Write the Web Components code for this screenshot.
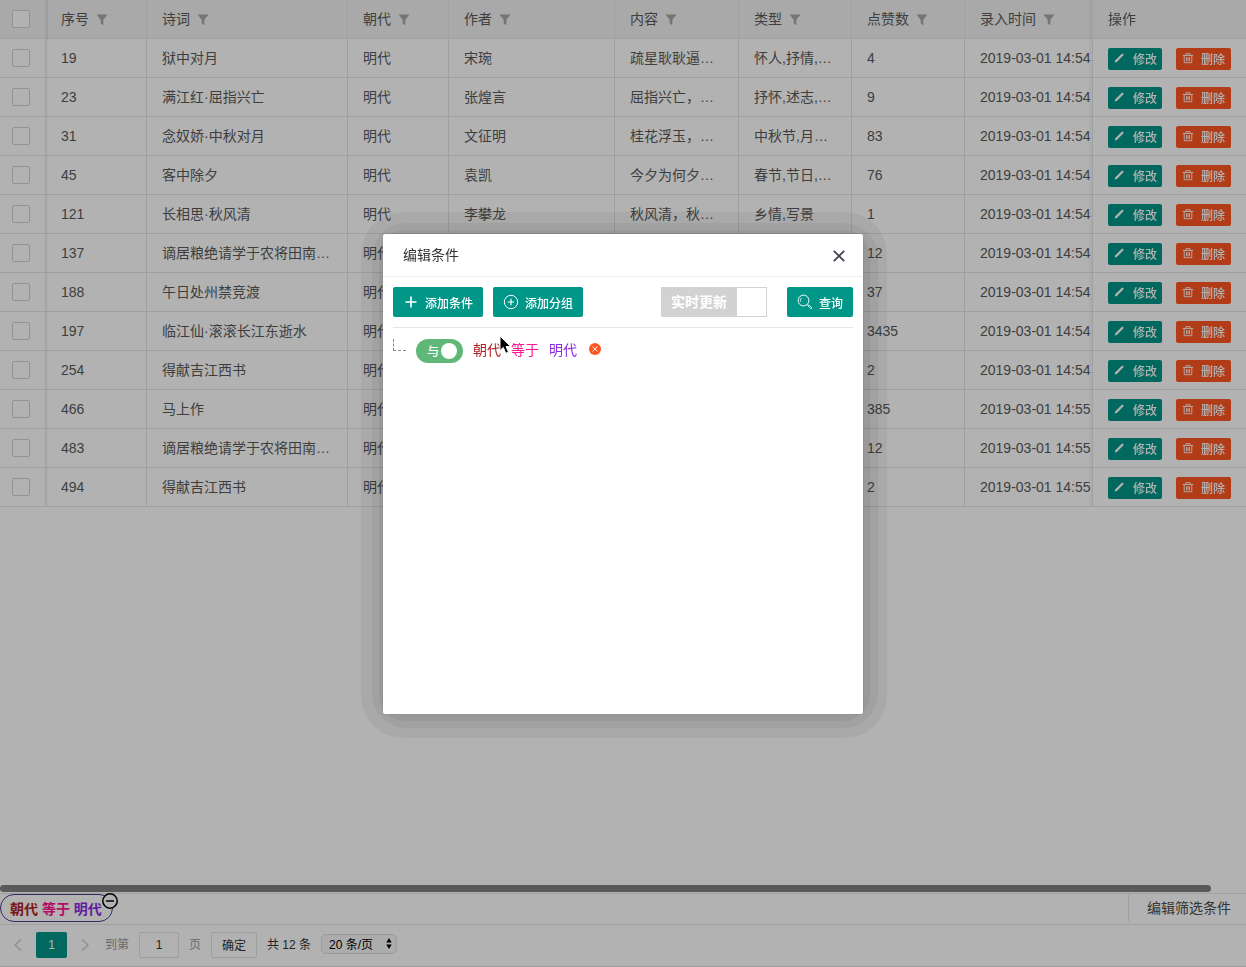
<!DOCTYPE html>
<html lang="zh-CN">
<head>
<meta charset="utf-8">
<title>诗词列表</title>
<style>
  html, body { margin: 0; height: 100%; }
  body {
    overflow: hidden;
    font: 14px/24px "Liberation Sans", "Noto Sans CJK SC", sans-serif;
    color: #5a5a5a;
    background: #fff;
    --teal: #009688;
    --danger: #ff5722;
    --line: #e6e6e6;
    --edge: #d2d2d2;
  }
</style>
</head>
<body>
<poem-page></poem-page>

<script>
const ICONS = {
  filter: ['0 0 12 12', '<path fill="currentColor" d="M0.5 0.5h11L7.3 5.8V11.2L4.7 9.6V5.8z"/>'],
  edit: ['0 0 12 12', '<path fill="currentColor" d="M1.700 10.500l.6-2.200 6.600-6.600q.5-.4.900 0l.7.700q.4.400 0 .900l-6.600 6.600z"/>'],
  trash: ['0 0 12 12', '<g fill="none" stroke="currentColor" stroke-width=".9"><path d="M.8 3.500h10.400M3.900 3.300V1.700h4.200v1.600M2.200 3.700v7h7.600v-7M4.500 5.200v4M6 5.200v4M7.500 5.200v4"/></g>'],
  plus: ['0 0 12 12', '<path fill="none" stroke="currentColor" stroke-width="1.600" d="M6 .5v11M.5 6h11"/>'],
  ring: ['0 0 16 16', '<g fill="none" stroke="currentColor"><circle cx="8" cy="8" r="6.700"/><path stroke-width="1.200" d="M8 4.800v6.400M4.800 8h6.400"/></g>'],
  search: ['0 0 16 16', '<g fill="none" stroke="currentColor"><circle cx="6.500" cy="6.500" r="5.400"/><path d="M3.500 7.500a3.200 3.200 0 0 1 1-3.600" stroke-width=".8"/><path d="M10.400 10.500l1 1"/><path d="M11.700 10.900l3 2.800q.3 1-.8 1l-2.900-2.900z" stroke-width=".8"/></g>'],
  close: ['0 0 12 12', '<path fill="none" stroke="currentColor" stroke-width="1.800" d="M.8.800l10.400 10.400M11.200.800L.8 11.200"/>'],
  remove: ['0 0 12 12', '<circle cx="6" cy="6" r="6" fill="currentColor"/><path stroke="#fff" stroke-width=".9" d="M3.500 3.500l5 5M8.500 3.500l-5 5"/>'],
  minus: ['0 0 16 16', '<circle cx="8" cy="8" r="7.200" fill="#fff" stroke="currentColor" stroke-width="1.500"/><path stroke="currentColor" stroke-width="1.500" d="M4 8h8"/>'],
  prev: ['0 0 8 12', '<path fill="none" stroke="currentColor" stroke-width="1.200" d="M7 .5L1 6l6 5.500"/>'],
  next: ['0 0 8 12', '<path fill="none" stroke="currentColor" stroke-width="1.200" d="M1 .5L7 6l-6 5.500"/>'],
  updown: ['0 0 6 12', '<path fill="#000" d="M3 0l3 5H0zM3 12l3-5H0z"/>'],
  pointer: ['0 0 13 20', '<path fill="#000" stroke="#fff" stroke-width="1" d="M1 1v14.500l3.300-3.100 2.500 5.900 2.700-1.100L7 11.500h4.700z"/>']
};

function define(name, html, setup) {
  customElements.define(name, class extends HTMLElement {
    constructor() {
      super();
      const t = document.createElement('template');
      t.innerHTML = html;
      this.attachShadow({ mode: 'open' }).append(t.content.cloneNode(true));
    }
    connectedCallback() { if (setup) setup(this, this.shadowRoot); }
  });
}

/* vector icon; its box is sized by the user */
define('ui-icon', `<style>
  :host { display: inline-block; flex: none; width: 12px; height: 12px; }
  svg { display: block; width: 100%; height: 100%; overflow: visible; }
</style><svg aria-hidden="true"></svg>`, (el, root) => {
  const [box, body] = ICONS[el.getAttribute('name')];
  const svg = root.querySelector('svg');
  svg.setAttribute('viewBox', box);
  svg.innerHTML = body;
});

define('ui-button', `<style>
  :host { display: inline-block; flex: none; }
  button {
    display: flex; align-items: center; box-sizing: border-box; height: 30px; margin: 0; padding: 3px 10px 0;
    border: 0; border-radius: 2px; background: var(--teal); color: #fff;
    font: inherit; font-size: 12px; font-weight: 500; line-height: 26px; white-space: nowrap; cursor: pointer;
  }
  :host([size=xs]) button { height: 22px; padding: 1px 5px 0; line-height: 20px; }
  :host([kind=danger]) button { padding-right: 6px; background: var(--danger); }
  ::slotted(ui-icon) { margin: -3px 8px 0 0; }
</style><button type="button"><slot></slot></button>`);

define('data-grid', `<style>
  :host { display: block; position: relative; isolation: isolate; overflow: hidden; }
  table { width: 100%; min-width: 1282px; table-layout: fixed; border-collapse: separate; border-spacing: 0; }
  th, td {
    box-sizing: border-box; height: 39px; padding: 0 15px; text-align: left; font-weight: 400; line-height: 28px;
    white-space: nowrap; overflow: hidden; border: 0 solid var(--line); border-width: 0 1px 1px 0; background: #fff;
  }
  th { background: #f2f2f2; }
  th ui-icon { margin-left: 3px; color: #a8a8a8; vertical-align: -2px; }
  .pick { position: sticky; left: 0; z-index: 1; padding: 0 0 0 12px; overflow: visible; box-shadow: 2px 0 0 rgba(0,0,0,.03); }
  .ops { position: sticky; right: 0; z-index: 1; border-width: 0 0 1px 1px; overflow: visible; box-shadow: -3px 0 0 rgba(0,0,0,.03); }
  th.pick { box-shadow: 2px 0 0 rgba(0,0,0,.06); }
  .tools { display: flex; gap: 14px; padding-top: 2px; }
  .tools ui-icon { margin-top: -3px; }
  .tools ui-icon[name=trash] { margin-left: 1px; margin-right: 7px; }
  input { display: block; appearance: none; box-sizing: border-box; width: 18px; height: 18px; margin: 0; border: 1px solid var(--edge); border-radius: 2px; background: #fff; }
  .bar { position: absolute; z-index: 2; left: 0; bottom: 1px; width: 97.200%; height: 7px; border-radius: 4px; background: #808080; }
</style>
<table>
  <colgroup><col style="width:46px"><col style="width:101px"><col style="width:201px"><col style="width:101px"><col style="width:166px"><col style="width:124px"><col style="width:113px"><col style="width:113px"><col><col style="width:154px"></colgroup>
  <thead><tr></tr></thead><tbody></tbody>
</table>
<div class="bar"></div>`, (el, root) => {
  const heads = ['序号', '诗词', '朝代', '作者', '内容', '类型', '点赞数', '录入时间'];
  const rows = [
    ['19', '狱中对月', '宋琬', '疏星耿耿逼…', '怀人,抒情,…', '4', '54'],
    ['23', '满江红·屈指兴亡', '张煌言', '屈指兴亡，…', '抒怀,述志,…', '9', '54'],
    ['31', '念奴娇·中秋对月', '文征明', '桂花浮玉，…', '中秋节,月…', '83', '54'],
    ['45', '客中除夕', '袁凯', '今夕为何夕…', '春节,节日,…', '76', '54'],
    ['121', '长相思·秋风清', '李攀龙', '秋风清，秋…', '乡情,写景', '1', '54'],
    ['137', '谪居粮绝请学于农将田南…', '', '', '', '12', '54'],
    ['188', '午日处州禁竞渡', '', '', '', '37', '54'],
    ['197', '临江仙·滚滚长江东逝水', '', '', '', '3435', '54'],
    ['254', '得献吉江西书', '', '', '', '2', '54'],
    ['466', '马上作', '', '', '', '385', '55'],
    ['483', '谪居粮绝请学于农将田南…', '', '', '', '12', '55'],
    ['494', '得献吉江西书', '', '', '', '2', '55']
  ];
  root.querySelector('thead tr').innerHTML =
    '<th class="pick"><input type="checkbox" aria-label="全选"></th>' +
    heads.map(h => `<th>${h} <ui-icon name="filter"></ui-icon></th>`).join('') +
    '<th class="ops">操作</th>';
  root.querySelector('tbody').innerHTML = rows.map(([id, title, who, text, kind, likes, min]) => `<tr>
    <td class="pick"><input type="checkbox" aria-label="选择 ${id}"></td>
    <td>${id}</td><td>${title}</td><td>明代</td><td>${who}</td><td>${text}</td><td>${kind}</td><td>${likes}</td><td>2019-03-01 14:${min}</td>
    <td class="ops"><div class="tools">
      <ui-button size="xs"><ui-icon name="edit"></ui-icon>修改</ui-button>
      <ui-button size="xs" kind="danger"><ui-icon name="trash"></ui-icon>删除</ui-button>
    </div></td></tr>`).join('');
});

define('filter-bar', `<style>
  :host { display: flex; justify-content: space-between; box-sizing: border-box; height: 32px; border: solid var(--line); border-width: 1px 0; }
  .chip { position: relative; box-sizing: border-box; height: 28px; padding: 0 10px 0 9px; border: 1px solid #483d8b; border-radius: 14px; font-weight: 700; line-height: 28px; white-space: nowrap; }
  .field { color: #b22222; } .op { color: #ff1493; } .value { color: #8a2be2; }
  .drop { position: absolute; right: -6px; top: -2px; padding: 0; border: 0; background: none; color: #000; line-height: 0; }
  .drop ui-icon { width: 16px; height: 16px; }
  .edit { height: 28px; padding: 0 15px 0 18px; border: 0 solid var(--line); border-left-width: 1px; border-radius: 2px 0 0 2px; background: #fff; color: #4c4c4c; font: inherit; line-height: 28px; }
</style>
<div class="chip"><span class="field">朝代</span> <span class="op">等于</span> <span class="value">明代</span><button class="drop" type="button" aria-label="移除条件"><ui-icon name="minus"></ui-icon></button></div>
<button class="edit" type="button">编辑筛选条件</button>`);

define('grid-pager', `<style>
  :host { display: flex; align-items: center; gap: 10px; box-sizing: border-box; height: 42px; padding: 0 0 2px; border-bottom: 1px solid var(--line); font-size: 12px; color: #333; white-space: nowrap; }
  nav { display: flex; align-items: center; }
  a { display: flex; align-items: center; justify-content: center; width: 36px; height: 26px; color: #c8c8c8; text-decoration: none; }
  a ui-icon { width: 8px; }
  a.now { width: 31px; border-radius: 2px; background: var(--teal); color: #fff; }
  nav + label { margin-left: -8px; }
  label { display: flex; align-items: center; gap: 10px; color: #999; }
  input, button { box-sizing: border-box; height: 26px; margin: 0; border: 1px solid #e2e2e2; border-radius: 2px; background: #fff; font: inherit; color: #333; }
  input { width: 40px; padding: 0; text-align: center; }
  button { width: 46px; padding: 1px 0 0; line-height: 24px; }
  .size { position: relative; margin-bottom: 2px; }
  select { appearance: none; display: block; box-sizing: border-box; width: 76px; height: 20px; margin: 0; padding: 1px 0 0 7px; border: 1px solid #dcdcdc; border-radius: 5px; background: #f6f6f6; font: inherit; line-height: 18px; color: #000; }
  .size ui-icon { position: absolute; right: 5px; top: 4px; width: 6px; height: 11px; pointer-events: none; }
</style>
<nav aria-label="分页"><a href="#prev" aria-label="上一页"><ui-icon name="prev"></ui-icon></a><a class="now" href="#1">1</a><a href="#next" aria-label="下一页"><ui-icon name="next"></ui-icon></a></nav>
<label>到第 <input type="text" value="1"> 页</label>
<button type="button">确定</button>
<span>共 12 条</span>
<div class="size"><select aria-label="每页条数"><option>20 条/页</option></select><ui-icon name="updown"></ui-icon></div>`);

define('ui-dialog', `<style>
  :host { position: fixed; z-index: 10; inset: 0; display: grid; place-items: center; padding-bottom: 19px; background: rgba(0,0,0,.3); }
  section { position: relative; isolation: isolate; width: 480px; }
  .halo { position: absolute; z-index: -1; background: rgba(0,0,0,.05); }
  .far { inset: -22px -24px -24px -22px; border-radius: 42px; }
  .mid { inset: -11px -15px -14px -11px; border-radius: 34px; }
  .near { inset: -4px -7px -7px -4px; border-radius: 26px; }
  .box { display: flex; flex-direction: column; min-height: 480px; border-radius: 2px; background: #fff; box-shadow: 0 0 2px rgba(0,0,0,.15); }
  header { display: flex; align-items: center; justify-content: space-between; height: 42px; padding: 0 18px 0 20px; border-bottom: 1px solid #eee; color: #333; }
  h2 { margin: 0; font: inherit; }
  header button { margin: 2px 0 0; padding: 0; border: 0; background: none; color: #444450; line-height: 0; }
  .body { flex: 1; padding: 10px; }
</style>
<section role="dialog" aria-labelledby="t">
  <div class="halo far"></div><div class="halo mid"></div><div class="halo near"></div>
  <div class="box">
    <header><h2 id="t"><slot name="title"></slot></h2><button type="button" aria-label="关闭"><ui-icon name="close"></ui-icon></button></header>
    <div class="body"><slot></slot></div>
  </div>
</section>`);

define('condition-editor', `<style>
  :host { display: block; position: relative; }
  .bar { display: flex; gap: 10px; padding-bottom: 10px; border-bottom: 1px solid var(--line); }
  .bar ui-icon[name=plus] { margin-right: 8px; margin-left: 2px; }
  .bar ui-icon[name=ring], .bar ui-icon[name=search] { width: 16px; height: 16px; margin-right: 6px; }
  .live, .join { position: relative; display: flex; box-sizing: border-box; flex: none; color: #fff; }
  .live { height: 30px; margin: 0 10px 0 auto; border: 1px solid var(--edge); font-weight: 700; line-height: 28px; }
  .live span { padding: 0 10px 0 9px; background: var(--edge); }
  .live i { width: 29px; }
  label input { position: absolute; inset: 0; width: 100%; height: 100%; margin: 0; opacity: 0; }
  .rule { display: flex; align-items: flex-start; gap: 10px; padding-top: 11px; }
  .branch { width: 12px; height: 11px; border: dashed #888; border-width: 0 0 1px 1px; }
  .join { width: 47px; height: 24px; padding: 0 6px 0 11px; align-items: center; justify-content: space-between; border-radius: 12px; background: #5fb878; font-size: 12px; font-weight: 500; }
  .join span { padding-top: 2px; }
  .join i { width: 16px; height: 16px; border-radius: 50%; background: #fff; }
  a { line-height: 22px; text-decoration: none; }
  .field { color: #b22222; } .op { color: #ff1493; } .value { color: #8a2be2; }
  .rule button { margin: 4px 0 0 2px; padding: 0; border: 0; background: none; color: var(--danger); line-height: 0; }
  .pointer { position: absolute; left: 106px; top: 48px; width: 13px; height: 20px; }
</style>
<div class="bar">
  <ui-button><ui-icon name="plus"></ui-icon>添加条件</ui-button>
  <ui-button><ui-icon name="ring"></ui-icon>添加分组</ui-button>
  <label class="live"><input type="checkbox"><span>实时更新</span><i></i></label>
  <ui-button><ui-icon name="search"></ui-icon>查询</ui-button>
</div>
<div class="rule">
  <div class="branch"></div>
  <label class="join"><input type="checkbox" checked><span>与</span><i></i></label>
  <a class="field" href="#field">朝代</a><a class="op" href="#op">等于</a><a class="value" href="#value">明代</a>
  <button type="button" aria-label="删除条件"><ui-icon name="remove"></ui-icon></button>
</div>
<ui-icon class="pointer" name="pointer"></ui-icon>`);

define('poem-page', `<style>
  :host { display: flex; flex-direction: column; height: 100vh; }
  data-grid { flex: 1; min-height: 0; }
</style>
<data-grid></data-grid>
<filter-bar></filter-bar>
<grid-pager></grid-pager>
<ui-dialog><span slot="title">编辑条件</span><condition-editor></condition-editor></ui-dialog>`);
</script>
</body>
</html>
